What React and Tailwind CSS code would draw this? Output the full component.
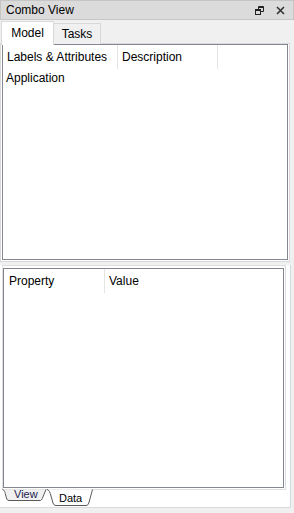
import React from "react";

function FloatIcon() {
  return (
    <svg width="9" height="9" viewBox="0 0 9 9" fill="none" stroke="#222" strokeWidth="1">
      <path d="M3.5 3.5V0.5h5v5h-3" />
      <path d="M3.5 1.5h5" />
      <rect x="0.5" y="3.5" width="5" height="5" />
      <path d="M0.5 4.5h5" />
    </svg>
  );
}

function CloseIcon() {
  return (
    <svg width="9" height="9" viewBox="0 0 9 9" fill="none" stroke="#333" strokeWidth="1.6">
      <path d="M1 1l7 7M8 1l-7 7" />
    </svg>
  );
}

export default function App() {
  return (
    <div className="w-[294px] h-[513px] bg-[#f0f0f0] font-['Liberation_Sans',Arial,sans-serif] text-[12px] text-black overflow-hidden">
      {/* title bar */}
      <div className="h-[20px] bg-[#dbdbdb] border border-[#c6c6c6] flex items-center pl-[5px]">
        <span className="flex-1">Combo View</span>
        <div className="flex items-center gap-[12px] pr-[8px]">
          <FloatIcon />
          <CloseIcon />
        </div>
      </div>

      {/* top tabs */}
      <div className="h-[24px] flex items-end pl-px">
        <div className="relative z-10 w-[53px] h-[24px] -mb-px bg-white border-l border-t border-r border-[#d9d9d9] flex items-center justify-center pb-[2px]">
          Model
        </div>
        <div className="w-[47px] h-[21px] bg-[#f0f0f0] border-t border-r border-[#d9d9d9] flex items-center justify-center">
          Tasks
        </div>
      </div>

      {/* model pane */}
      <div className="-mt-px w-[290px] h-[219px] bg-white border border-[#d9d9d9] px-px pb-px">
        <div className="h-full border border-[#828790] bg-white">
          <div className="h-[24px] flex">
            <div className="w-[115px] border-r border-[#e5e5e5] flex items-center pl-[4px]">Labels &amp; Attributes</div>
            <div className="w-[100px] border-r border-[#e5e5e5] flex items-center pl-[4px]">Description</div>
          </div>
          <div className="h-[17px] flex items-center pl-[3px]">Application</div>
        </div>
      </div>

      {/* property view */}
      <div className="mt-[3px] w-[291px] h-[243px] bg-white border-r border-b border-[#dadada]">
        <div className="ml-[2px] w-[284px] h-[225px] border border-[#dedede] pt-[2px] pr-px pb-px">
          <div className="h-full border border-[#828790] bg-white">
            <div className="h-[24px] flex">
              <div className="w-[101px] border-r border-[#e5e5e5] flex items-center pl-[5px]">Property</div>
              <div className="flex items-center pl-[4px]">Value</div>
            </div>
          </div>
        </div>
        <div className="relative -mt-px h-[18px] w-[100px]">
          <svg className="absolute left-0 top-0" width="100" height="18" viewBox="0 0 100 18" fill="none">
            <path d="M2.5 0.5C4.5 1 5 3 6 7.5L6.8 10C7.2 11 8 11.5 9 11.5H40C41 11.5 41.8 10.8 42.3 9.5L46 0.5Z" fill="#f0f0f0" />
            <path d="M2.5 0.5C4.5 1 5 3 6 7.5L6.8 10C7.2 11 8 11.5 9 11.5H40C41 11.5 41.8 10.8 42.3 9.5L46 0.5" stroke="#5a5a5a" />
            <path d="M47 0.5C49 1 50 3 51 7L53 14C53.5 15.5 54.5 16.5 56 16.5H86C87.5 16.5 88.3 15.5 88.8 14L92.5 0.5Z" fill="#ffffff" />
            <path d="M47 0.5C49 1 50 3 51 7L53 14C53.5 15.5 54.5 16.5 56 16.5H86C87.5 16.5 88.3 15.5 88.8 14L92.5 0.5" stroke="#5a5a5a" />
          </svg>
          <span className="absolute left-[14px] top-[-2px] h-[14px] flex items-center text-[11px] text-[#1a1a50]">View</span>
          <span className="absolute left-[59px] top-[2px] h-[14px] flex items-center text-[11px]">Data</span>
        </div>
      </div>
    </div>
  );
}
